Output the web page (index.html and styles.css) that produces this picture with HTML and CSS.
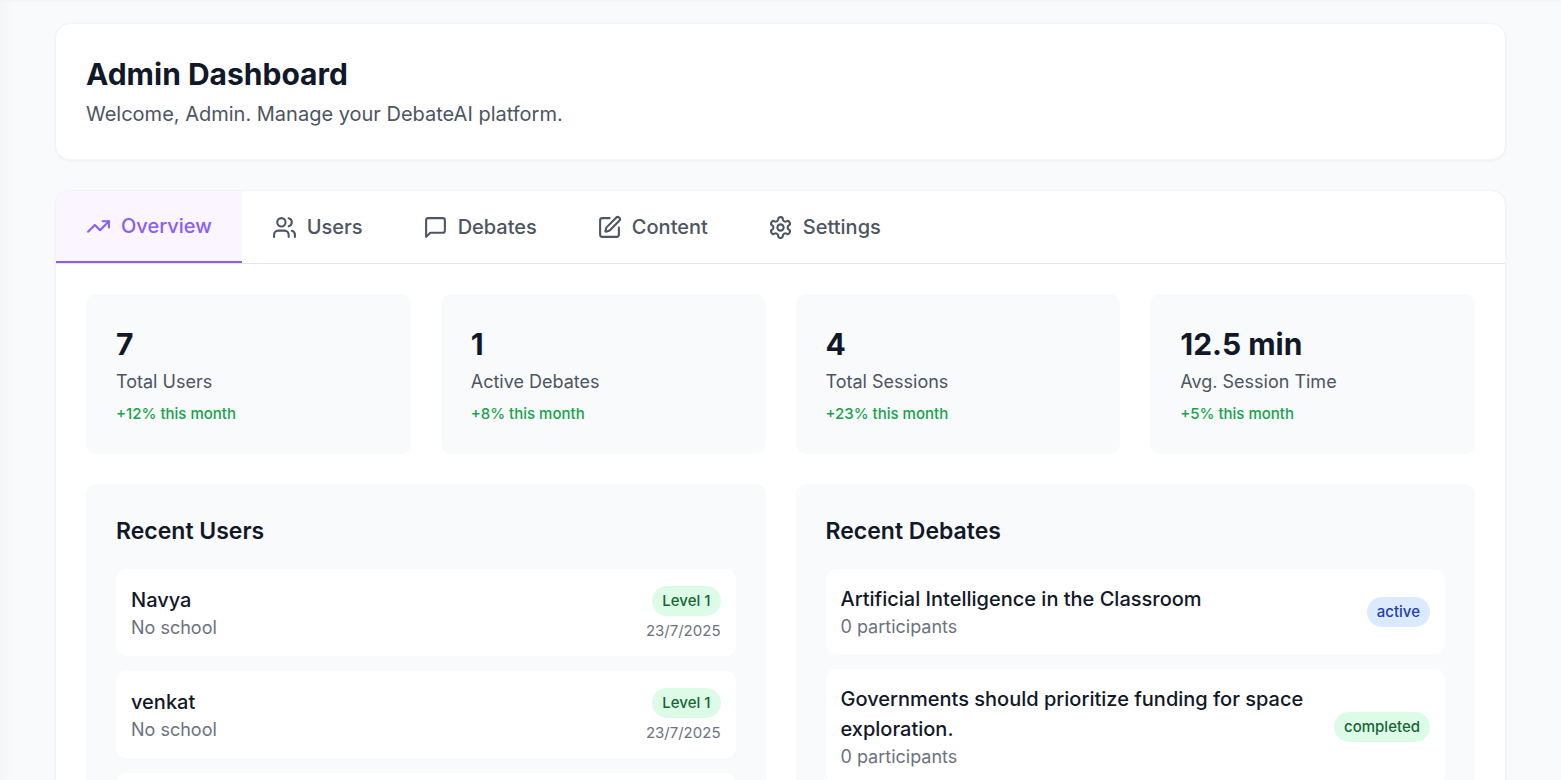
FILE: index.html
```html
<!DOCTYPE html>
<html lang="en">
<head>
<meta charset="utf-8">
<meta name="viewport" content="width=device-width, initial-scale=1">
<title>Admin Dashboard</title>
<link rel="stylesheet" href="styles.css">
</head>
<body>
<main class="page">
  <header class="card intro">
    <h1 class="title">Admin Dashboard</h1>
    <p class="subtitle">Welcome, Admin. Manage your DebateAI platform.</p>
  </header>

  <section class="card">
    <nav class="tabs" aria-label="Dashboard sections">
      <button type="button" class="tab tab-active" aria-current="page">
        <svg class="icon" viewBox="0 0 24 24" aria-hidden="true"><path d="M22 7 13.5 15.5 8.5 10.5 2 17"/><path d="M16 7h6v6"/></svg>
        Overview
      </button>
      <button type="button" class="tab">
        <svg class="icon" viewBox="0 0 24 24" aria-hidden="true"><path d="M16 21v-2a4 4 0 0 0-4-4H6a4 4 0 0 0-4 4v2"/><circle cx="9" cy="7" r="4"/><path d="M22 21v-2a4 4 0 0 0-3-3.87"/><path d="M16 3.13a4 4 0 0 1 0 7.75"/></svg>
        Users
      </button>
      <button type="button" class="tab">
        <svg class="icon" viewBox="0 0 24 24" aria-hidden="true"><path d="M21 15a2 2 0 0 1-2 2H7l-4 4V5a2 2 0 0 1 2-2h14a2 2 0 0 1 2 2z"/></svg>
        Debates
      </button>
      <button type="button" class="tab">
        <svg class="icon" viewBox="0 0 24 24" aria-hidden="true"><path d="M12 3H5a2 2 0 0 0-2 2v14a2 2 0 0 0 2 2h14a2 2 0 0 0 2-2v-7"/><path d="M18.375 2.625a1 1 0 0 1 3 3l-9.013 9.014a2 2 0 0 1-.853.505l-2.873.84a.5.5 0 0 1-.62-.62l.84-2.873a2 2 0 0 1 .506-.852z"/></svg>
        Content
      </button>
      <button type="button" class="tab">
        <svg class="icon" viewBox="0 0 24 24" aria-hidden="true"><path d="M12.22 2h-.44a2 2 0 0 0-2 2v.18a2 2 0 0 1-1 1.73l-.43.25a2 2 0 0 1-2 0l-.15-.08a2 2 0 0 0-2.73.73l-.22.38a2 2 0 0 0 .73 2.73l.15.1a2 2 0 0 1 1 1.72v.51a2 2 0 0 1-1 1.74l-.15.09a2 2 0 0 0-.73 2.73l.22.38a2 2 0 0 0 2.73.73l.15-.08a2 2 0 0 1 2 0l.43.25a2 2 0 0 1 1 1.73V20a2 2 0 0 0 2 2h.44a2 2 0 0 0 2-2v-.18a2 2 0 0 1 1-1.73l.43-.25a2 2 0 0 1 2 0l.15.08a2 2 0 0 0 2.73-.73l.22-.39a2 2 0 0 0-.73-2.73l-.15-.08a2 2 0 0 1-1-1.74v-.5a2 2 0 0 1 1-1.74l.15-.09a2 2 0 0 0 .73-2.73l-.22-.38a2 2 0 0 0-2.73-.73l-.15.08a2 2 0 0 1-2 0l-.43-.25a2 2 0 0 1-1-1.73V4a2 2 0 0 0-2-2z"/><circle cx="12" cy="12" r="3"/></svg>
        Settings
      </button>
    </nav>

    <div class="content">
      <div class="stats">
        <article class="stat">
          <p class="stat-value">7</p>
          <p class="stat-label">Total Users</p>
          <p class="stat-change">+12% this month</p>
        </article>
        <article class="stat">
          <p class="stat-value">1</p>
          <p class="stat-label">Active Debates</p>
          <p class="stat-change">+8% this month</p>
        </article>
        <article class="stat">
          <p class="stat-value">4</p>
          <p class="stat-label">Total Sessions</p>
          <p class="stat-change">+23% this month</p>
        </article>
        <article class="stat">
          <p class="stat-value">12.5 min</p>
          <p class="stat-label">Avg. Session Time</p>
          <p class="stat-change">+5% this month</p>
        </article>
      </div>

      <div class="panels">
        <section class="panel">
          <h2 class="panel-title">Recent Users</h2>
          <ul class="list">
            <li class="item item-user">
              <div>
                <p class="item-name">Navya</p>
                <p class="item-note">No school</p>
              </div>
              <div class="item-side">
                <span class="badge badge-green">Level 1</span>
                <p class="item-date">23/7/2025</p>
              </div>
            </li>
            <li class="item item-user">
              <div>
                <p class="item-name">venkat</p>
                <p class="item-note">No school</p>
              </div>
              <div class="item-side">
                <span class="badge badge-green">Level 1</span>
                <p class="item-date">23/7/2025</p>
              </div>
            </li>
            <li class="item item-user"></li>
          </ul>
        </section>

        <section class="panel">
          <h2 class="panel-title">Recent Debates</h2>
          <ul class="list">
            <li class="item">
              <div>
                <p class="item-name">Artificial Intelligence in the Classroom</p>
                <p class="item-note">0 participants</p>
              </div>
              <span class="badge badge-blue">active</span>
            </li>
            <li class="item">
              <div>
                <p class="item-name">Governments should prioritize funding for space exploration.</p>
                <p class="item-note">0 participants</p>
              </div>
              <span class="badge badge-green">completed</span>
            </li>
          </ul>
        </section>
      </div>
    </div>
  </section>
</main>
</body>
</html>
```

FILE: styles.css
```css
*,
*::before,
*::after {
  box-sizing: border-box;
}

body,
h1,
h2,
p,
ul {
  margin: 0;
  padding: 0;
}

body {
  background:
    linear-gradient(to bottom, #f3f4f6, rgba(243, 244, 246, 0) 3px),
    linear-gradient(to right, #f5f6f8, #f9fafb 14px);
  color: #111827;
  font-family: Inter, "Liberation Sans", sans-serif;
  font-size: 20px;
  line-height: 30px;
}

.page {
  display: flex;
  flex-direction: column;
  gap: 30px;
  padding: 23px 55px 30px;
}

.card {
  overflow: hidden;
  background: #fff;
  border: 1px solid #f3f4f6;
  border-radius: 15px;
  box-shadow: 0 1px 3px rgba(0, 0, 0, 0.05);
}

.intro {
  padding: 30px;
}

.title {
  font-size: 30px;
  font-weight: 700;
  line-height: 40px;
}

.subtitle {
  margin-top: 5px;
  color: #4b5563;
}

.tabs {
  display: flex;
  border-bottom: 1px solid #e5e7eb;
}

.tab {
  display: flex;
  align-items: center;
  gap: 10px;
  padding: 20px 30px;
  border: 0;
  background: none;
  color: #4b5563;
  font: inherit;
  font-weight: 500;
  cursor: pointer;
}

.tab-active {
  border-bottom: 2px solid #8b5cf6;
  background: #faf5ff;
  color: #8b5cf6;
}

.icon {
  width: 25px;
  height: 25px;
  fill: none;
  stroke: currentColor;
  stroke-width: 2;
  stroke-linecap: round;
  stroke-linejoin: round;
}

.content {
  padding: 30px;
}

.stats {
  display: grid;
  grid-template-columns: repeat(4, 1fr);
  gap: 30px;
  margin-bottom: 30px;
}

.stat,
.panel {
  padding: 30px;
  border-radius: 10px;
  background: #f9fafb;
}

.stat-value {
  font-size: 30px;
  font-weight: 700;
  line-height: 40px;
}

.stat-label {
  margin-top: 5px;
  color: #4b5563;
  font-size: 18px;
  line-height: 25px;
}

.stat-change {
  margin-top: 10px;
  color: #16a34a;
  font-size: 15px;
  font-weight: 500;
  line-height: 20px;
}

.panels {
  display: grid;
  grid-template-columns: repeat(2, 1fr);
  gap: 30px;
}

.panel-title {
  margin-bottom: 20px;
  font-size: 23px;
  font-weight: 600;
  line-height: 35px;
}

.list {
  display: flex;
  flex-direction: column;
  gap: 15px;
  list-style: none;
}

.item {
  display: flex;
  align-items: center;
  justify-content: space-between;
  gap: 15px;
  padding: 15px;
  border-radius: 10px;
  background: #fff;
}

.item-user {
  min-height: 87px;
}

.item-name {
  font-weight: 500;
}

.item-note {
  color: #6b7280;
  font-size: 18px;
  line-height: 25px;
}

.item-side {
  display: flex;
  flex-direction: column;
  align-items: flex-end;
  gap: 5px;
  padding-top: 2px;
}

.item-date {
  color: #6b7280;
  font-size: 15px;
  line-height: 20px;
}

.badge {
  padding: 5px 10px;
  border-radius: 15px;
  font-size: 15px;
  font-weight: 500;
  line-height: 20px;
}

.badge-green {
  background: #dcfce7;
  color: #166534;
}

.badge-blue {
  background: #dbeafe;
  color: #1e40af;
}
```
